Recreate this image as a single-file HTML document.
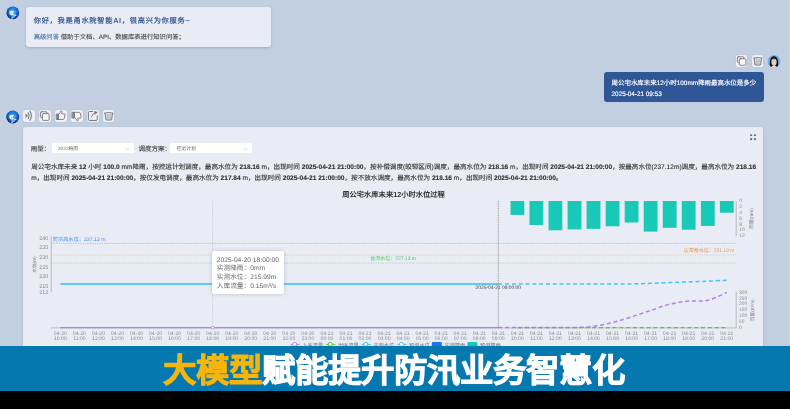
<!DOCTYPE html>
<html lang="zh-CN"><head><meta charset="utf-8">
<style>
*{margin:0;padding:0;box-sizing:border-box}
html,body{width:790px;height:409px;overflow:hidden}
body{will-change:transform;background:#c2cfe0;font-family:"Liberation Sans",sans-serif;position:relative;color:#333;text-rendering:geometricPrecision}
.a{position:absolute;white-space:nowrap}
.card{position:absolute;background:#e9ecf5;border-radius:3px;box-shadow:0 1px 2.5px rgba(60,80,120,.28)}
.btn{position:absolute;background:#edf0f6;border-radius:2px;box-shadow:0 0 1.5px rgba(120,140,170,.25)}
.btn svg{position:absolute;left:0;top:0}
.sel{position:absolute;background:#fff;border-radius:1.5px;height:10.1px}
b{font-weight:700;color:#333}
</style></head><body>
<svg class="a" style="left:5px;top:5px" width="15" height="15" viewBox="-7.80 -7.80 15 15">
<defs><radialGradient id="ga" cx="0.5" cy="0.4" r="0.6"><stop offset="0" stop-color="#36a2f8"/><stop offset="0.45" stop-color="#1a7fe6"/><stop offset="0.75" stop-color="#0e4aa8"/><stop offset="1" stop-color="#061f55"/></radialGradient></defs>
<circle cx="0" cy="0" r="6.4" fill="url(#ga)"/>
<path d="M-2.2,1.2 C-2,3.5 -0.5,5 0.8,5 C2,4.8 2.8,3.2 2.6,1.4Z" fill="#58b4fa"/>
<path d="M-3.5,0.2 C-3.6,-1.6 -2,-2.4 -0.4,-2.2 C1,-2 1.8,-1 1.6,0.4 C1.4,1.8 0,2.3 -1.2,2.2 C-2.6,2.1 -3.4,1.4 -3.5,0.2Z" fill="#e6f2ff"/>
<path d="M1.7,1.4 L3.8,2.6 L3.4,3.4 L1.3,2.2Z" fill="#eef6ff"/>
<path d="M2.8,-1.4 L3.6,-0.4 L2.9,0Z" fill="#cfe6ff"/>
<path d="M-1.4,4.6 L0.2,4.8 L0,6 L-1.2,5.9Z" fill="#e6f2ff"/>
<circle cx="0.7" cy="0.2" r="0.62" fill="#2a2a2a"/>
<circle cx="-1.3" cy="0.25" r="0.5" fill="#e07a80"/>
</svg>
<div class="card" style="left:26px;top:7px;width:245px;height:39.7px"></div>
<div class="a" style="left:33.7px;top:15.8px;font-size:7.25px;letter-spacing:0.7px;font-weight:700;color:#3a5c96;line-height:10px">你好，我是甬水院智能AI，很高兴为你服务~</div>
<div class="a" style="left:33.7px;top:33px;font-size:6.33px;color:#4a4a4a;-webkit-text-stroke:0.12px currentColor;line-height:9px"><span style="color:#5676ae">高级问答</span> 借助于文档、API、数据库表进行知识问答；</div>

<div class="btn" style="left:735.8px;top:55.3px;width:11.4px;height:11.6px"><svg width="11.4" height="11.6" viewBox="0 0 12 12"><g fill="none" stroke="#6f6f6f" stroke-width="0.9" stroke-linecap="round" stroke-linejoin="round"><rect x="1.4" y="1.8" width="7" height="6" rx="1.3"/><rect x="3.5" y="3.8" width="7" height="6.9" rx="1.1" fill="#fbfbfd"/></g></svg></div>
<div class="btn" style="left:751.9px;top:55.3px;width:11.6px;height:11.6px"><svg width="11.6" height="11.6" viewBox="0 0 12 12"><g fill="none" stroke="#6f6f6f" stroke-width="0.9" stroke-linecap="round" stroke-linejoin="round" stroke="#7a7a7a"><path d="M1.6,3.2 Q6,2.2 10.4,3.2" stroke-width="1"/><path d="M2.2,3.6 L3,10.2 Q6,10.8 9,10.2 L9.8,3.6" fill="#d6d8dc" stroke-width="0.9"/><path d="M4.6,4.6 V9.2 M6,4.6 V9.4 M7.4,4.6 V9.2" stroke-width="0.55" stroke="#a8a8a8"/></g></svg></div>
<svg class="a" style="left:767px;top:55px" width="14" height="14" viewBox="-7.00 -6.40 14 14">
<defs><clipPath id="ucl"><circle cx="0" cy="0" r="6.3"/></clipPath></defs>
<g clip-path="url(#ucl)">
<rect x="-7" y="-7" width="14" height="14" fill="#6fabe8"/>
<path d="M-3.9,5.2 C-4.6,1 -4.2,-5 0,-5.2 C4.2,-5 4.6,1 3.9,5.2 C3,5.6 -3,5.6 -3.9,5.2Z" fill="#151515"/>
<path d="M-2.2,4.6 L-2.4,7 H2.4 L2.2,4.6Z" fill="#e9d6ca"/>
<path d="M-2.6,0 C-2.6,-2.2 -1.4,-2.6 0,-2.6 C1.4,-2.6 2.6,-2.2 2.6,0 C2.6,3 1.4,4.4 0,4.5 C-1.4,4.4 -2.6,3 -2.6,0Z" fill="#efd6c6"/>
<path d="M-2.8,0.2 C-2.6,-3 2.6,-3 2.8,0.2 C2.4,-1.2 1,-2.2 0,-2 C-1,-2.2 -2.4,-1.2 -2.8,0.2Z" fill="#151515"/>
<ellipse cx="-1.05" cy="0.3" rx="0.45" ry="0.3" fill="#3a2a2a"/><ellipse cx="1.05" cy="0.3" rx="0.45" ry="0.3" fill="#3a2a2a"/>
<ellipse cx="0" cy="2.6" rx="0.7" ry="0.35" fill="#d46a6a"/>
</g></svg>
<div class="a" style="left:603.7px;top:72.3px;width:160px;height:29.7px;background:#2f5797;border-radius:3px"></div>
<div class="a" style="left:611.6px;top:78.6px;font-size:6.45px;color:#fff;-webkit-text-stroke:0.15px #fff;line-height:9px">周公宅水库未来12小时100mm降雨最高水位是多少</div>
<div class="a" style="left:611.6px;top:90px;font-size:6.35px;color:#fff;-webkit-text-stroke:0.15px #fff;line-height:9px">2025-04-21 09:53</div>

<svg class="a" style="left:5px;top:109px" width="15" height="15" viewBox="-7.70 -8.00 15 15">
<defs><radialGradient id="gb" cx="0.5" cy="0.4" r="0.6"><stop offset="0" stop-color="#36a2f8"/><stop offset="0.45" stop-color="#1a7fe6"/><stop offset="0.75" stop-color="#0e4aa8"/><stop offset="1" stop-color="#061f55"/></radialGradient></defs>
<circle cx="0" cy="0" r="6.5" fill="url(#gb)"/>
<path d="M-2.2,1.2 C-2,3.5 -0.5,5 0.8,5 C2,4.8 2.8,3.2 2.6,1.4Z" fill="#58b4fa"/>
<path d="M-3.5,0.2 C-3.6,-1.6 -2,-2.4 -0.4,-2.2 C1,-2 1.8,-1 1.6,0.4 C1.4,1.8 0,2.3 -1.2,2.2 C-2.6,2.1 -3.4,1.4 -3.5,0.2Z" fill="#e6f2ff"/>
<path d="M1.7,1.4 L3.8,2.6 L3.4,3.4 L1.3,2.2Z" fill="#eef6ff"/>
<path d="M2.8,-1.4 L3.6,-0.4 L2.9,0Z" fill="#cfe6ff"/>
<path d="M-1.4,4.6 L0.2,4.8 L0,6 L-1.2,5.9Z" fill="#e6f2ff"/>
<circle cx="0.7" cy="0.2" r="0.62" fill="#2a2a2a"/>
<circle cx="-1.3" cy="0.25" r="0.5" fill="#e07a80"/>
</svg>
<div class="btn" style="left:23.2px;top:110.1px;width:11.6px;height:11.6px"><svg width="11.6" height="11.6" viewBox="0 0 12 12"><g fill="none" stroke="#6f6f6f" stroke-width="0.9" stroke-linecap="round" stroke-linejoin="round"><path d="M3.3,4.4 L4.7,5.9 L3.3,7.4 Z" fill="#8a8a8a" stroke-width="0.7"/><path d="M5.5,2.7 Q7.2,5.9 5.5,9.1" stroke-width="1"/><path d="M7.2,1 Q10,5.9 7.2,10.6" stroke-width="1.05"/></g></svg></div><div class="btn" style="left:39.1px;top:110.1px;width:11.6px;height:11.6px"><svg width="11.6" height="11.6" viewBox="0 0 12 12"><g fill="none" stroke="#6f6f6f" stroke-width="0.9" stroke-linecap="round" stroke-linejoin="round"><rect x="1.4" y="1.8" width="7" height="6" rx="1.3"/><rect x="3.5" y="3.8" width="7" height="6.9" rx="1.1" fill="#fbfbfd"/></g></svg></div><div class="btn" style="left:55.1px;top:110.1px;width:11.6px;height:11.6px"><svg width="11.6" height="11.6" viewBox="0 0 12 12"><g fill="none" stroke="#6f6f6f" stroke-width="0.9" stroke-linecap="round" stroke-linejoin="round" stroke="#6e6e6e"><path d="M1.7,4.2 h2.2 v5.6 h-2.2z" fill="#8a8a8a"/><path d="M3.9,4.4 L5.6,2.4 L6.1,0.9 C6.9,0.7 7.4,1.5 7.2,2.3 L6.8,4.0 L9.6,4.0 C10.2,4.0 10.6,4.6 10.4,5.2 L9.3,9.1 C9.1,9.6 8.8,9.8 8.2,9.8 L3.9,9.8z" fill="#fbfbfd"/></g></svg></div><div class="btn" style="left:71.0px;top:110.1px;width:11.6px;height:11.6px"><svg width="11.6" height="11.6" viewBox="0 0 12 12"><g fill="none" stroke="#6f6f6f" stroke-width="0.9" stroke-linecap="round" stroke-linejoin="round" stroke="#6e6e6e"><path d="M1.4,2.4 h2.4 v5.8 h-2.4z" fill="#8a8a8a"/><path d="M3.8,2.4 H8.4 C9,2.4 9.3,2.6 9.5,3.2 L10.5,7.2 C10.6,7.8 10.2,8.4 9.6,8.4 L7,8.4 L7.3,10.2 C7.5,11 7,11.5 6.3,11.3 L5.8,9.8 L3.8,8Z" fill="#fbfbfd"/></g></svg></div><div class="btn" style="left:87.0px;top:110.1px;width:11.6px;height:11.6px"><svg width="11.6" height="11.6" viewBox="0 0 12 12"><g fill="none" stroke="#6f6f6f" stroke-width="0.9" stroke-linecap="round" stroke-linejoin="round" stroke="#6a6a6a"><path d="M5.9,1.6 H2.4 C1.8,1.6 1.4,2 1.4,2.6 V9.8 C1.4,10.4 1.8,10.8 2.4,10.8 H9.6 C10.2,10.8 10.6,10.4 10.6,9.8 V6.2" stroke-width="1"/><path d="M4.6,7 Q5.4,3.6 9,2.6" stroke-width="0.95"/><path d="M8,1.4 L10.6,2.2 L8.8,4.2Z" fill="#6a6a6a" stroke-width="0.5"/></g></svg></div><div class="btn" style="left:102.9px;top:110.1px;width:11.6px;height:11.6px"><svg width="11.6" height="11.6" viewBox="0 0 12 12"><g fill="none" stroke="#6f6f6f" stroke-width="0.9" stroke-linecap="round" stroke-linejoin="round" stroke="#7a7a7a"><path d="M1.6,3.2 Q6,2.2 10.4,3.2" stroke-width="1"/><path d="M2.2,3.6 L3,10.2 Q6,10.8 9,10.2 L9.8,3.6" fill="#d6d8dc" stroke-width="0.9"/><path d="M4.6,4.6 V9.2 M6,4.6 V9.4 M7.4,4.6 V9.2" stroke-width="0.55" stroke="#a8a8a8"/></g></svg></div>

<div class="card" style="left:23.1px;top:127px;width:740.4px;height:260px"></div>
<svg class="a" style="left:748px;top:132px" width="10" height="10" viewBox="0 0 10 10">
<g fill="#505050" transform="translate(5,5.2) scale(0.85) translate(-4.9,-5.1)"><path d="M1.6,1.8 h2.2 v0.8 l-0.6,0 l0.9,0.9 -0.6,0.6 -0.9,-0.9 v0.6 h-1z"/>
<path d="M8.2,1.8 h-2.2 v0.8 l0.6,0 l-0.9,0.9 0.6,0.6 0.9,-0.9 v0.6 h1z"/>
<path d="M1.6,8.4 h2.2 v-0.8 l-0.6,0 l0.9,-0.9 -0.6,-0.6 -0.9,0.9 v-0.6 h-1z"/>
<path d="M8.2,8.4 h-2.2 v-0.8 l0.6,0 l-0.9,-0.9 0.6,-0.6 0.9,0.9 v-0.6 h1z"/></g></svg>
<div class="a" style="left:30.7px;top:145.2px;font-size:6.5px;color:#3c3c3c;-webkit-text-stroke:0.1px currentColor;line-height:9px">雨型：</div>
<div class="sel" style="left:51.8px;top:143.1px;width:81.8px"></div>
<div class="a" style="left:57.9px;top:146.8px;font-size:4.8px;color:#666;line-height:6px">2022梅雨</div>
<div class="a" style="left:138.5px;top:145.2px;font-size:6.5px;color:#3c3c3c;-webkit-text-stroke:0.1px currentColor;line-height:9px">调度方案：</div>
<div class="sel" style="left:170.4px;top:143.1px;width:81.4px"></div>
<div class="a" style="left:176.5px;top:146.8px;font-size:4.8px;color:#666;line-height:6px">控运计划</div>

<div class="a" style="left:31.2px;top:161.8px;font-size:6.58px;color:#333;-webkit-text-stroke:0.12px #333;line-height:11.2px;width:732px;white-space:normal">周公宅水库未来 <b>12</b> 小时 <b>100.0</b> mm降雨，按控运计划调度，最高水位为 <b>218.16</b> m，出现时间 <b>2025-04-21 21:00:00</b>，按补偿调度(皎郓区间)调度，最高水位为 <b>218.16</b> m，出现时间 <b>2025-04-21 21:00:00</b>，按最高水位(237.12m)调度，最高水位为 <b>218.16</b> m，出现时间 <b>2025-04-21 21:00:00</b>，按仅发电调度，最高水位为 <b>217.84</b> m，出现时间 <b>2025-04-21 21:00:00</b>，按不放水调度，最高水位为 <b>218.16</b> m，出现时间 <b>2025-04-21 21:00:00</b>。</div>

<div class="a" style="left:342.3px;top:189.6px;font-size:7.27px;font-weight:700;color:#333;line-height:10px">周公宅水库未来12小时水位过程</div>

<svg class="a" style="left:0;top:0" width="790" height="409" viewBox="0 0 790 409" font-family="Liberation Sans, sans-serif">
  <path d="M125.6,148.2 l1.8,1.8 l1.8,-1.8" stroke="#b0b0b0" stroke-width="0.55" fill="none"/>
  <path d="M243.7,148.2 l1.8,1.8 l1.8,-1.8" stroke="#b0b0b0" stroke-width="0.55" fill="none"/>
  <line x1="51.2" y1="236" x2="51.2" y2="292" stroke="#999" stroke-width="0.6"/>
  <g font-size="5.4" fill="#888" text-anchor="end">
    <text x="48.3" y="240">240</text><text x="48.3" y="249.2">235</text><text x="48.3" y="259">230</text>
    <text x="48.3" y="268.7">225</text><text x="48.3" y="278.2">220</text><text x="48.3" y="288">215</text><text x="48.3" y="293.7">212</text>
  </g>
  <text transform="translate(35.6,264.6) rotate(-90)" font-size="4.7" fill="#777" text-anchor="middle">水位(m)</text>
  <line x1="51.5" y1="243.4" x2="736" y2="243.4" stroke="#6aa3f0" stroke-width="0.6" stroke-dasharray="1.2,1.2"/>
  <text x="52.8" y="241.1" font-size="5.2" fill="#3d8ef2">防洪高水位：237.12 m</text>
  <line x1="51.5" y1="255" x2="736" y2="255" stroke="#d8b890" stroke-width="0.6" stroke-dasharray="1.2,1.2"/>
  <text x="734.5" y="252.3" font-size="5" fill="#e6994f" text-anchor="end">正常蓄水位：231.13 m</text>
  <line x1="51.5" y1="263.1" x2="736" y2="263.1" stroke="#7ed07e" stroke-width="0.6" stroke-dasharray="1.2,1.2"/>
  <text x="416" y="260" font-size="5" fill="#4ccf5a" text-anchor="end">台汛水位：227.13 m</text>
  <line x1="50.8" y1="327.9" x2="736.2" y2="327.9" stroke="#aaa" stroke-width="0.7"/>
  <g font-size="5.15" fill="#8f8f8f" text-anchor="middle"><text x="60.4" y="335.3">04-20</text><text x="60.4" y="340.1">10:00</text><text x="79.4" y="335.3">04-20</text><text x="79.4" y="340.1">11:00</text><text x="98.5" y="335.3">04-20</text><text x="98.5" y="340.1">12:00</text><text x="117.5" y="335.3">04-20</text><text x="117.5" y="340.1">13:00</text><text x="136.6" y="335.3">04-20</text><text x="136.6" y="340.1">14:00</text><text x="155.6" y="335.3">04-20</text><text x="155.6" y="340.1">15:00</text><text x="174.6" y="335.3">04-20</text><text x="174.6" y="340.1">16:00</text><text x="193.7" y="335.3">04-20</text><text x="193.7" y="340.1">17:00</text><text x="212.7" y="335.3">04-20</text><text x="212.7" y="340.1">18:00</text><text x="231.8" y="335.3">04-20</text><text x="231.8" y="340.1">19:00</text><text x="250.8" y="335.3">04-20</text><text x="250.8" y="340.1">20:00</text><text x="269.8" y="335.3">04-20</text><text x="269.8" y="340.1">21:00</text><text x="288.9" y="335.3">04-20</text><text x="288.9" y="340.1">22:00</text><text x="307.9" y="335.3">04-20</text><text x="307.9" y="340.1">23:00</text><text x="327.0" y="335.3">04-21</text><text x="327.0" y="340.1">00:00</text><text x="346.0" y="335.3">04-21</text><text x="346.0" y="340.1">01:00</text><text x="365.0" y="335.3">04-21</text><text x="365.0" y="340.1">02:00</text><text x="384.1" y="335.3">04-21</text><text x="384.1" y="340.1">03:00</text><text x="403.1" y="335.3">04-21</text><text x="403.1" y="340.1">04:00</text><text x="422.2" y="335.3">04-21</text><text x="422.2" y="340.1">05:00</text><text x="441.2" y="335.3">04-21</text><text x="441.2" y="340.1">06:00</text><text x="460.2" y="335.3">04-21</text><text x="460.2" y="340.1">07:00</text><text x="479.3" y="335.3">04-21</text><text x="479.3" y="340.1">08:00</text><text x="498.3" y="335.3">04-21</text><text x="498.3" y="340.1">09:00</text><text x="517.4" y="335.3">04-21</text><text x="517.4" y="340.1">10:00</text><text x="536.4" y="335.3">04-21</text><text x="536.4" y="340.1">11:00</text><text x="555.4" y="335.3">04-21</text><text x="555.4" y="340.1">12:00</text><text x="574.5" y="335.3">04-21</text><text x="574.5" y="340.1">13:00</text><text x="593.5" y="335.3">04-21</text><text x="593.5" y="340.1">14:00</text><text x="612.6" y="335.3">04-21</text><text x="612.6" y="340.1">15:00</text><text x="631.6" y="335.3">04-21</text><text x="631.6" y="340.1">16:00</text><text x="650.6" y="335.3">04-21</text><text x="650.6" y="340.1">17:00</text><text x="669.7" y="335.3">04-21</text><text x="669.7" y="340.1">18:00</text><text x="688.7" y="335.3">04-21</text><text x="688.7" y="340.1">19:00</text><text x="707.8" y="335.3">04-21</text><text x="707.8" y="340.1">20:00</text><text x="726.8" y="335.3">04-21</text><text x="726.8" y="340.1">21:00</text></g>
  <line x1="736.2" y1="201" x2="736.2" y2="235.8" stroke="#999" stroke-width="0.6"/>
  <g font-size="4.9" fill="#8a8a8a">
    <text x="739.2" y="202.3">0</text><text x="739.2" y="208.1">2</text><text x="739.2" y="213.9">4</text><text x="739.2" y="219.7">6</text><text x="739.2" y="225.5">8</text><text x="739.2" y="231.3">10</text><text x="739.2" y="237.1">12</text>
  </g>
  <text transform="translate(753,218.6) rotate(-90)" font-size="4.8" fill="#808080" text-anchor="middle">雨量(mm)</text>
  <line x1="736.2" y1="292" x2="736.2" y2="327.9" stroke="#999" stroke-width="0.6"/>
  <g font-size="4.9" fill="#8a8a8a">
    <text x="739" y="293.7">300</text><text x="739" y="299.5">250</text><text x="739" y="305.3">200</text><text x="739" y="311.2">150</text><text x="739" y="317">100</text><text x="739" y="322.9">50</text><text x="739" y="328.7">0</text>
  </g>
  <text transform="translate(754,310.4) rotate(-90)" font-size="4.8" fill="#808080" text-anchor="middle">流量(m³/s)</text>
  <g fill="#17c9b6"><rect x="510.5" y="201" width="13.8" height="13.9"/><rect x="529.5" y="201" width="13.8" height="24.0"/><rect x="548.5" y="201" width="13.8" height="29.3"/><rect x="567.6" y="201" width="13.8" height="28.4"/><rect x="586.6" y="201" width="13.8" height="27.8"/><rect x="605.7" y="201" width="13.8" height="25.3"/><rect x="624.7" y="201" width="13.8" height="21.5"/><rect x="643.7" y="201" width="13.8" height="30.6"/><rect x="662.8" y="201" width="13.8" height="26.8"/><rect x="681.8" y="201" width="13.8" height="28.7"/><rect x="700.9" y="201" width="13.8" height="24.9"/><rect x="719.9" y="201" width="13.8" height="11.7"/></g>
  <line x1="60.4" y1="327.6" x2="498.3" y2="327.6" stroke="#b77cf2" stroke-width="1.4"/>
  <path d="M498.3,327.5 C501.5,327.5 511.0,327.5 517.4,327.5 C523.7,327.5 530.1,327.5 536.4,327.5 C542.7,327.5 549.1,327.5 555.4,327.5 C561.8,327.5 568.1,327.7 574.5,327.5 C580.8,327.3 587.2,327.2 593.5,326.3 C599.9,325.5 606.2,324.1 612.6,322.5 C618.9,320.9 625.3,318.8 631.6,316.8 C637.9,314.8 644.3,312.6 650.6,310.5 C657.0,308.4 663.3,305.7 669.7,304.2 C676.0,302.6 682.4,301.8 688.7,301.1 C695.1,300.5 701.4,301.7 707.8,300.3 C714.1,298.9 723.6,293.8 726.8,292.5" stroke="#b57af3" stroke-width="1.5" fill="none" stroke-dasharray="4,2.8"/>
  <line x1="517.4" y1="327.6" x2="726.8" y2="327.6" stroke="#5cc43a" stroke-width="1.4" stroke-dasharray="4,2.8"/>
  <line x1="60.5" y1="284" x2="498.3" y2="284" stroke="#2cc2f4" stroke-width="1.5"/>
  <path d="M498.3,284.0 C501.5,284.0 511.0,284.0 517.4,284.0 C523.7,284.0 530.1,284.0 536.4,284.0 C542.7,284.0 549.1,284.0 555.4,284.0 C561.8,284.0 568.1,284.0 574.5,284.0 C580.8,284.0 587.2,284.0 593.5,284.0 C599.9,284.0 606.2,284.0 612.6,284.0 C618.9,284.0 625.3,284.0 631.6,283.9 C637.9,283.8 644.3,283.5 650.6,283.3 C657.0,283.1 663.3,282.8 669.7,282.6 C676.0,282.4 682.4,282.1 688.7,281.9 C695.1,281.7 701.4,281.5 707.8,281.2 C714.1,280.9 723.6,280.4 726.8,280.3" stroke="#3ec6f6" stroke-width="1.5" fill="none" stroke-dasharray="4,2.8"/>
  <line x1="212.6" y1="200.7" x2="212.6" y2="328" stroke="#a8a8a8" stroke-width="0.55" stroke-dasharray="1.1,1.3"/>
  <circle cx="212.6" cy="327.6" r="1.4" fill="#fff" stroke="#b77cf2" stroke-width="0.8"/>
  <line x1="498.3" y1="200.7" x2="498.3" y2="328" stroke="#555" stroke-width="0.6" stroke-dasharray="1,0.8"/>
  <text x="498.3" y="289" font-size="4.9" fill="#444" text-anchor="middle">2025-04-21 09:00:00</text>
  <g stroke-width="1" fill="#fff">
    <line x1="290.6" y1="344.4" x2="299.6" y2="344.4" stroke="#b97cf0"/><circle cx="294.7" cy="344.4" r="2" stroke="#b97cf0"/>
    <line x1="326.2" y1="344.4" x2="335.2" y2="344.4" stroke="#52c41a"/><circle cx="330.3" cy="344.4" r="2" stroke="#52c41a"/>
    <line x1="361.7" y1="344.4" x2="370.7" y2="344.4" stroke="#2ec0f0"/><circle cx="365.8" cy="344.4" r="2" stroke="#2ec0f0"/>
    <line x1="397.3" y1="344.4" x2="406.3" y2="344.4" stroke="#3cc8f5"/><circle cx="401.4" cy="344.4" r="2" stroke="#3cc8f5"/>
  </g>
  <rect x="431.8" y="342" width="10" height="6" rx="1" fill="#1a73e8"/>
  <rect x="467.4" y="342" width="10" height="6" rx="1" fill="#17c9b6"/>
  <g font-size="5.2" fill="#777"><text x="302.4" y="346.7">入库流量</text><text x="337.9" y="346.7">出库流量</text><text x="373.4" y="346.7">实测水位</text><text x="409" y="346.7">预测水位</text><text x="444.5" y="346.7">实测降雨</text><text x="480" y="346.7">预测降雨</text></g>
</svg>

<div class="a" style="left:211.6px;top:251px;width:72.5px;height:42.5px;background:#fff;border-radius:2px;box-shadow:0 0 4px rgba(0,0,0,.18)"></div>
<div class="a" style="left:216.8px;top:256.9px;font-size:6.7px;color:#666;line-height:8.55px">2025-04-20 18:00:00<br>实测降雨：0mm<br>实测水位：215.99m<br>入库流量：0.15m³/s</div>

<div class="a" style="left:0;top:346px;width:790px;height:44.6px;background:#0678b0"></div>
<div class="a" style="left:0;top:390.6px;width:790px;height:18.4px;background:#000"></div>
<div class="a" style="left:163.2px;top:350.5px;font-size:33px;font-weight:900;line-height:40px;color:#fff;-webkit-text-stroke:1.05px currentColor"><span style="color:#f7b50a">大模型</span>赋能提升防汛业务智慧化</div>
<div class="a" style="left:788.3px;top:0;width:1.7px;height:346px;background:#cdd4de"></div>
</body></html>
